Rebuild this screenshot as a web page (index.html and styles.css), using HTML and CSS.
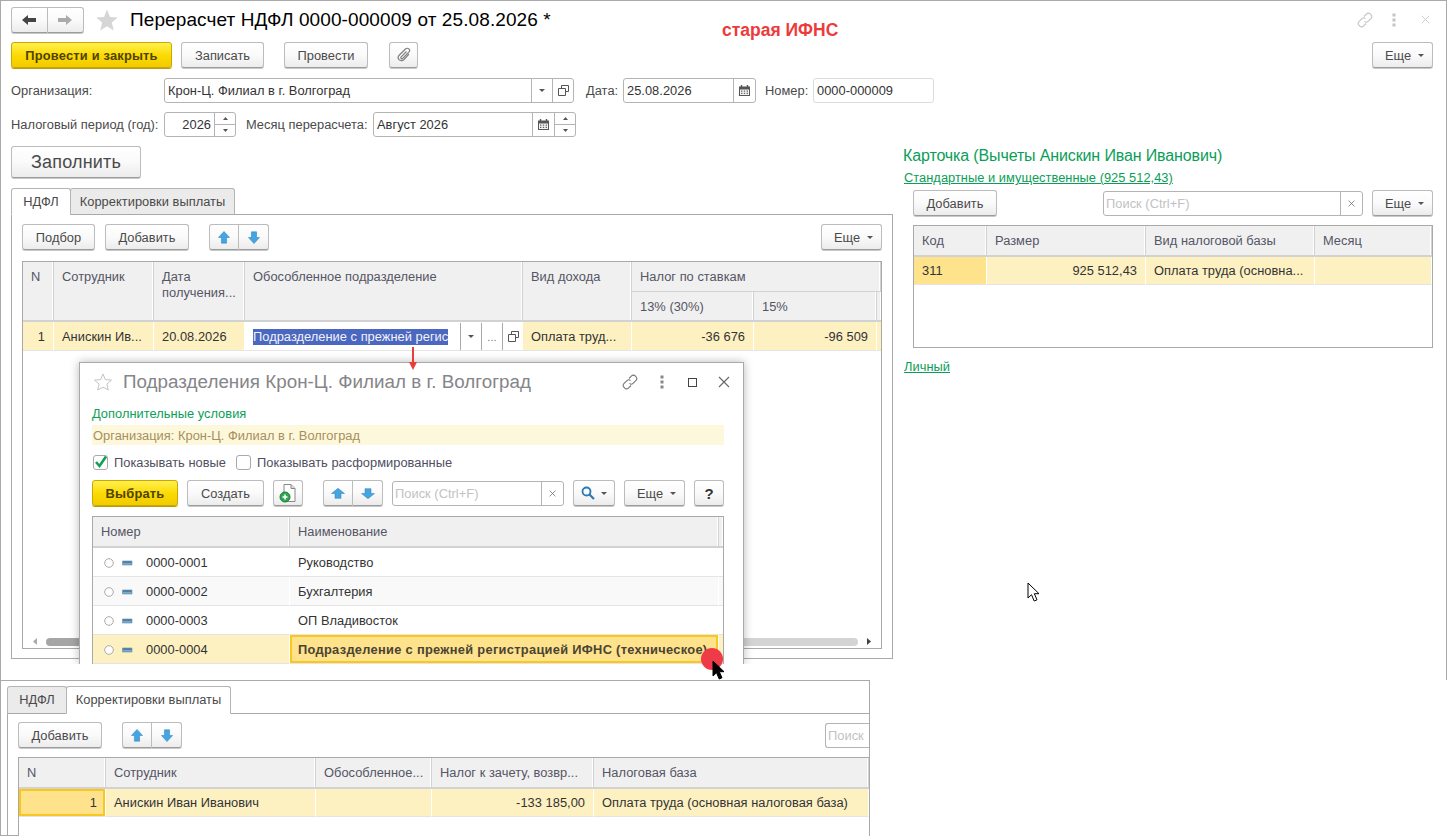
FILE: index.html
```html
<!DOCTYPE html>
<html lang="ru">
<head>
<meta charset="utf-8">
<title>Перерасчет НДФЛ</title>
<link rel="stylesheet" href="styles.css">
</head>
<body>
<svg class="defs" width="0" height="0" aria-hidden="true">
  <symbol id="i-tri" viewBox="0 0 7 4" preserveAspectRatio="none"><path d="M0 0h7L3.5 4z" fill="currentColor"/></symbol>
  <symbol id="i-open" viewBox="0 0 11 11"><path d="M3.5 3.5V.5h7v6h-3M.5 3.5h7v7h-7z" fill="none" stroke="#555"/></symbol>
  <symbol id="i-cal" viewBox="0 0 11 11"><path d="M0 1.5h11V11H0z" fill="#555"/><path d="M2.5 0v3M8.5 0v3" stroke="#555" stroke-width="1.4"/><path d="M1 4.5h9V10H1z" fill="#f4f4f4"/><path d="M2 5.5h1.4v1.2H2zM4.8 5.5h1.4v1.2H4.8zM7.6 5.5H9v1.2H7.6zM2 7.8h1.4V9H2zM4.8 7.8h1.4V9H4.8zM7.6 7.8H9V9H7.6z" fill="#666"/></symbol>
  <symbol id="i-up" viewBox="0 0 14 16" preserveAspectRatio="none"><path d="M7 .5 13.5 8H10v7H4V8H.5z" fill="#45a4e2" stroke="#2b7fb8" stroke-width=".6"/></symbol>
  <symbol id="i-down" viewBox="0 0 14 16" preserveAspectRatio="none"><path d="M7 15.5 13.5 8H10V1H4v7H.5z" fill="#45a4e2" stroke="#2b7fb8" stroke-width=".6"/></symbol>
  <symbol id="i-link" viewBox="0 0 16 16"><g fill="none" stroke="currentColor" stroke-width="1.1"><path d="M7 4.5 9.6 1.9a2.5 2.5 0 0 1 3.6 0l.9.9a2.5 2.5 0 0 1 0 3.6L11 9.4a2.5 2.5 0 0 1-3.5 0"/><path d="M9 11.5 6.400 14.100a2.500 2.500 0 0 1-3.600 0l-.9-.9a2.500 2.500 0 0 1 0-3.600L5 6.600a2.500 2.500 0 0 1 3.500 0"/></g></symbol>
  <symbol id="i-dots" viewBox="0 0 4 14"><path d="M.5.5h3v3h-3zM.5 5.500h3v3h-3zM.5 10.500h3v3h-3z" fill="currentColor"/></symbol>
  <symbol id="i-x" viewBox="0 0 12 12"><path d="M1 1l10 10M11 1 1 11" stroke="currentColor" stroke-width="1.1" fill="none"/></symbol>
  <symbol id="i-row" viewBox="0 0 32 12"><circle cx="5" cy="6" r="4.300" fill="#fff" stroke="#aaa"/><path d="M18.500 4h9.500v4h-9.500z" fill="#7fa9c9" stroke="#5d87a8" stroke-width=".6"/><path d="M19 4.500h8.500v1.200H19z" fill="#3d6a8f"/></symbol>
  <symbol id="i-cursor" viewBox="0 0 13 20"><path d="M1 1v15l3.500-3.300L7.200 19l2.800-1.200-2.700-6.100H12z" fill="currentColor" stroke="#000" stroke-linejoin="round"/></symbol>
</svg>

<section class="win main-win">
  <header class="title-bar">
    <div class="btn-group nav-group">
      <button class="btn seg seg-nav"><svg width="14" height="10" viewBox="0 0 14 10"><path d="M0 5l6-5v3h8v4H6v3z" fill="#444"/></svg></button>
      <button class="btn seg seg-nav"><svg width="14" height="10" viewBox="0 0 14 10"><path d="M14 5 8 0v3H0v4h8v3z" fill="#aaa"/></svg></button>
    </div>
    <svg class="star" width="22" height="22" viewBox="0 0 22 22"><path d="M11 .5l3 7.600 7.800.4-6 5.100 2 7.900L11 17.200l-6.800 4.300 2-7.900-6-5.100L8 8.100z" fill="#d6d6d6"/></svg>
    <h1 class="doc-title">Перерасчет НДФЛ 0000-000009 от 25.08.2026 *</h1>
    <span class="old-note">старая ИФНС</span>
    <div class="win-icons">
      <svg class="ic-link" width="16" height="16"><use href="#i-link"/></svg>
      <svg class="ic-dots" width="4" height="14"><use href="#i-dots"/></svg>
      <svg class="ic-x" width="9" height="9"><use href="#i-x"/></svg>
    </div>
  </header>

  <div class="toolbar tb-main">
    <button class="btn btn-yellow w161">Провести и закрыть</button>
    <button class="btn w83 m9">Записать</button>
    <button class="btn w84 m20">Провести</button>
    <button class="btn w29 m21"><svg width="15" height="16" viewBox="0 0 15 16"><path d="M13 7 8 12.500c-1.500 1.500-3.800 1.500-5 .2s-1-3.300.4-4.700L9.500 2c1-1 2.500-1 3.400-.1s.9 2.300-.1 3.300L6.700 11.300c-.5.5-1.200.5-1.600.1s-.4-1.100.1-1.600L10.500 4.500" fill="none" stroke="#808080" stroke-width="1.200"/></svg></button>
    <button class="btn more w61 push">Еще<svg class="tri" width="6" height="3"><use href="#i-tri"/></svg></button>
  </div>

  <div class="form-row fr1">
    <label class="lbl w153">Организация:</label>
    <div class="field w410"><span class="val">Крон-Ц. Филиал в г. Волгоград</span>
      <span class="fb"><svg class="tri" width="6" height="3"><use href="#i-tri"/></svg></span>
      <span class="fb fb-open"><svg width="11" height="11"><use href="#i-open"/></svg></span></div>
    <label class="lbl m12 w37">Дата:</label>
    <div class="field w133"><span class="val">25.08.2026</span><span class="fb fb-cal"><svg width="11" height="11"><use href="#i-cal"/></svg></span></div>
    <label class="lbl m9 w48">Номер:</label>
    <div class="field field-light w121"><span class="val">0000-000009</span></div>
  </div>

  <div class="form-row fr2">
    <label class="lbl w153">Налоговый период (год):</label>
    <div class="field w72"><span class="val right">2026</span>
      <span class="spin"><span><svg class="tri-up" width="5" height="3"><use href="#i-tri"/></svg></span><span><svg width="5" height="3"><use href="#i-tri"/></svg></span></span></div>
    <label class="lbl m10 w127">Месяц перерасчета:</label>
    <div class="field w203"><span class="val">Август 2026</span><span class="fb fb-cal"><svg width="11" height="11"><use href="#i-cal"/></svg></span>
      <span class="spin"><span><svg class="tri-up" width="5" height="3"><use href="#i-tri"/></svg></span><span><svg width="5" height="3"><use href="#i-tri"/></svg></span></span></div>
  </div>

  <div class="body-cols">
    <div class="left-col">
      <button class="btn btn-big">Заполнить</button>
      <div class="tabs tabs-main">
        <span class="tab tab-active t60">НДФЛ</span>
        <span class="tab t164">Корректировки выплаты</span>
      </div>
      <div class="tab-panel panel-main">
        <div class="toolbar">
          <button class="btn w73">Подбор</button>
          <button class="btn w84 m10">Добавить</button>
          <div class="btn-group m20">
            <button class="btn seg seg-arrow"><svg width="12" height="13"><use href="#i-up"/></svg></button>
            <button class="btn seg seg-arrow"><svg width="12" height="13"><use href="#i-down"/></svg></button>
          </div>
          <button class="btn more w61 push">Еще<svg class="tri" width="6" height="3"><use href="#i-tri"/></svg></button>
        </div>
        <div class="grid-box main-grid">
          <table class="grid t-main">
            <colgroup><col class="c31"><col class="c100"><col class="c91"><col class="c278"><col class="c109"><col class="c122"><col class="c123"><col></colgroup>
            <thead>
              <tr class="h30"><th rowspan="2">N</th><th rowspan="2">Сотрудник</th><th rowspan="2">Дата получения...</th><th rowspan="2">Обособленное подразделение</th><th rowspan="2">Вид дохода</th><th colspan="3" class="th-group">Налог по ставкам</th></tr>
              <tr class="h30"><th>13% (30%)</th><th>15%</th><th class="slim"></th></tr>
            </thead>
            <tbody>
              <tr class="row-sel r28">
                <td class="right">1</td><td>Анискин Ив...</td><td>20.08.2026</td>
                <td class="edit-cell"><div class="edit-inner"><span class="edit-text"><span class="edit-sel">Подразделение с прежней регис</span></span><span class="eb"><svg class="tri" width="6" height="3"><use href="#i-tri"/></svg></span><span class="eb eb-dots">...</span><span class="eb"><svg width="11" height="11"><use href="#i-open"/></svg></span></div></td>
                <td>Оплата труд...</td><td class="right">-36 676</td><td class="right">-96 509</td><td class="slim"></td>
              </tr>
            </tbody>
          </table>
          <div class="hscroll">
            <svg width="4" height="7" viewBox="0 0 4 7"><path d="M4 0v7L0 3.500z" fill="#aaa"/></svg>
            <span class="thumb"></span>
            <svg width="4" height="7" viewBox="0 0 4 7"><path d="M0 0v7l4-3.500z" fill="#444"/></svg>
          </div>
        </div>
      </div>
    </div>

    <aside class="right-col">
      <h2 class="card-title">Карточка (Вычеты Анискин Иван Иванович)</h2>
      <a class="green-link">Стандартные и имущественные (925 512,43)</a>
      <div class="right-inner">
        <div class="toolbar">
          <button class="btn w84">Добавить</button>
          <div class="field search w260 push"><span class="val ph">Поиск (Ctrl+F)</span><span class="fb fb-x"><svg width="7" height="7"><use href="#i-x"/></svg></span></div>
          <button class="btn more w61 m9">Еще<svg class="tri" width="6" height="3"><use href="#i-tri"/></svg></button>
        </div>
        <div class="grid-box card-grid">
          <table class="grid">
            <colgroup><col class="c73"><col class="c159"><col class="c169"><col></colgroup>
            <thead><tr class="h31"><th>Код</th><th>Размер</th><th>Вид налоговой базы</th><th>Месяц</th></tr></thead>
            <tbody><tr class="row-sel r28"><td class="cell-cur">311</td><td class="right">925 512,43</td><td>Оплата труда (основна...</td><td></td></tr></tbody>
          </table>
        </div>
      </div>
      <a class="green-link lnk-personal">Личный</a>
    </aside>
  </div>
</section>

<section class="win popup">
  <header class="pop-title">
    <svg class="pop-star" width="18" height="18" viewBox="0 0 18 18"><path d="M9 1l2.400 5.600 6.100.5-4.600 4 1.400 6L9 14l-5.300 3.100 1.400-6-4.600-4 6.100-.5z" fill="#fff" stroke="#c4c4c4"/></svg>
    <h2 class="pop-h">Подразделения Крон-Ц. Филиал в г. Волгоград</h2>
    <div class="pop-icons">
      <svg class="p-link" width="16" height="16"><use href="#i-link"/></svg>
      <svg class="p-dots" width="4" height="14"><use href="#i-dots"/></svg>
      <span class="p-max"></span>
      <svg class="p-x" width="12" height="12"><use href="#i-x"/></svg>
    </div>
  </header>
  <div class="pop-body">
    <a class="extra">Дополнительные условия</a>
    <div class="org-bar">Организация: Крон-Ц. Филиал в г. Волгоград</div>
    <div class="check-row">
      <span class="chk"><svg width="15" height="15" viewBox="0 0 15 15"><path d="M3 7l3.500 4L13 1.500" fill="none" stroke="#0e9f58" stroke-width="2.600"/></svg></span>
      <span class="chk-lbl lbl-new">Показывать новые</span>
      <span class="chk"></span>
      <span class="chk-lbl">Показывать расформированные</span>
    </div>
    <div class="toolbar">
      <button class="btn btn-yellow w86">Выбрать</button>
      <button class="btn w77 m9">Создать</button>
      <button class="btn w30 m9"><svg width="18" height="20" viewBox="0 0 18 20"><path d="M5 1.500h7l4 4v13H5z" fill="#fff" stroke="#888"/><path d="M12 1.500v4h4" fill="#ddd" stroke="#888"/><circle cx="6" cy="14" r="5" fill="#2fa84f" stroke="#1d7d38"/><path d="M3.500 14h5M6 11.500v5" stroke="#fff" stroke-width="1.600"/></svg></button>
      <div class="btn-group m20">
        <button class="btn seg seg-arrow"><svg width="14" height="11"><use href="#i-up"/></svg></button>
        <button class="btn seg seg-arrow"><svg width="14" height="11"><use href="#i-down"/></svg></button>
      </div>
      <div class="field search w172 m9"><span class="val ph">Поиск (Ctrl+F)</span><span class="fb fb-x"><svg width="7" height="7"><use href="#i-x"/></svg></span></div>
      <button class="btn w42 m9 find"><svg width="14" height="14" viewBox="0 0 14 14"><circle cx="5.500" cy="5.500" r="4" fill="none" stroke="#2b78b5" stroke-width="1.800"/><path d="M8.500 8.500 13 13" stroke="#2b78b5" stroke-width="2.200"/></svg><svg class="tri" width="6" height="3"><use href="#i-tri"/></svg></button>
      <button class="btn more w61 m9">Еще<svg class="tri" width="6" height="3"><use href="#i-tri"/></svg></button>
      <button class="btn w30 m9 help">?</button>
    </div>
    <div class="grid-box pop-grid">
      <table class="grid">
        <colgroup><col class="c197"><col class="c429"><col></colgroup>
        <thead><tr class="h31"><th>Номер</th><th>Наименование</th><th class="slim"></th></tr></thead>
        <tbody>
          <tr class="r29"><td class="num"><svg width="32" height="12"><use href="#i-row"/></svg><span>0000-0001</span></td><td>Руководство</td><td class="slim"></td></tr>
          <tr class="r29 alt"><td class="num"><svg width="32" height="12"><use href="#i-row"/></svg><span>0000-0002</span></td><td>Бухгалтерия</td><td class="slim"></td></tr>
          <tr class="r29"><td class="num"><svg width="32" height="12"><use href="#i-row"/></svg><span>0000-0003</span></td><td>ОП Владивосток</td><td class="slim"></td></tr>
          <tr class="r29 row-sel"><td class="num"><svg width="32" height="12"><use href="#i-row"/></svg><span>0000-0004</span></td><td class="cell-focus bold">Подразделение с прежней регистрацией ИФНС (техническое)</td><td class="slim"></td></tr>
        </tbody>
      </table>
    </div>
  </div>
</section>

<section class="win lower-win">
  <div class="tabs tabs-lower">
    <span class="tab t59">НДФЛ</span>
    <span class="tab tab-active t165">Корректировки выплаты</span>
  </div>
  <div class="tab-panel panel-lower">
    <div class="toolbar">
      <button class="btn w84">Добавить</button>
      <div class="btn-group m20">
        <button class="btn seg seg-arrow"><svg width="12" height="13"><use href="#i-up"/></svg></button>
        <button class="btn seg seg-arrow"><svg width="12" height="13"><use href="#i-down"/></svg></button>
      </div>
      <div class="field search lower-search push"><span class="val ph">Поиск</span></div>
    </div>
    <div class="grid-box lower-grid">
      <table class="grid">
        <colgroup><col class="c87"><col class="c210"><col class="c116"><col class="c162"><col></colgroup>
        <thead><tr class="h31"><th>N</th><th>Сотрудник</th><th>Обособленное...</th><th>Налог к зачету, возвр...</th><th>Налоговая база</th></tr></thead>
        <tbody><tr class="row-sel r28"><td class="right cell-focus">1</td><td>Анискин Иван Иванович</td><td></td><td class="right">-133 185,00</td><td>Оплата труда (основная налоговая база)</td></tr></tbody>
      </table>
    </div>
  </div>
</section>

<svg class="red-arrow" width="8" height="24" viewBox="0 0 8 24"><path d="M3 0h2v15h3l-4 8-4-8h3z" fill="#ec3b3b"/></svg>
<span class="red-dot"></span>
<svg class="cur cur-black" width="13" height="20"><use href="#i-cursor"/></svg>
<svg class="cur cur-white" width="13" height="20"><use href="#i-cursor"/></svg>
</body>
</html>
```
FILE: styles.css
```css
* { box-sizing: border-box; }
html, body { margin: 0; padding: 0; }
body {
  position: relative;
  width: 1447px;
  height: 836px;
  overflow: hidden;
  background: #fff;
  font-family: "Liberation Sans", Arial, sans-serif;
  font-size: 12.85px;
  letter-spacing: .03px;
  color: #4a4a4a;
}
.defs { position: absolute; }
.win { position: absolute; background: #fff; }
h1, h2 { margin: 0; font-weight: normal; }

/* main window */
.main-win {
  left: 0; top: 0; width: 1447px; height: 680px;
  border: 1px solid #a9a9a9;
  border-bottom: 0;
  padding: 6px 13px 0 10px;
}
.title-bar { display: flex; align-items: center; height: 25px; position: relative; }
.nav-group { width: 73px; height: 25px; }
.seg-nav { width: 50%; height: 25px; }
.star { margin-left: 12px; }
.doc-title { margin-left: 12px; font-size: 19px; letter-spacing: .1px; color: #000; white-space: nowrap; }
.old-note { position: absolute; left: 711px; top: 13px; font-size: 17.5px; font-weight: bold; letter-spacing: 0; color: #ee3a3a; }
.win-icons { margin-left: auto; display: flex; align-items: center; color: #c4c4c4; margin-right: 3px; }
.ic-dots { margin-left: 19px; }
.ic-x { margin-left: 25px; }

/* buttons */
.btn {
  display: inline-flex; align-items: center; justify-content: center;
  height: 26px; padding: 0;
  border: 1px solid #bcbcbc; border-bottom-color: #9c9c9c; border-radius: 3px;
  background: linear-gradient(#fff, #fafafa 50%, #ececec);
  box-shadow: 0 1px 0 #c8c8c8;
  font: 12.85px "Liberation Sans", Arial, sans-serif;
  letter-spacing: .03px;
  color: #4a4a4a;
}
.btn-yellow {
  background: linear-gradient(#fff04f, #fbd900 55%, #f2cb00);
  border-color: #c9a800; font-weight: bold; color: #4f4300; box-shadow: 0 1px 0 #b89b12; letter-spacing: .2px;
}
.btn-big { width: 130px; height: 32px; padding-top: 1px; font-size: 18px; letter-spacing: .2px; display: flex; }
.btn-group { display: inline-flex; height: 26px; }
.seg { border-radius: 0; }
.seg:first-child { border-radius: 3px 0 0 3px; }
.seg:last-child { border-radius: 0 3px 3px 0; border-left: 0; }
.seg-arrow { width: 30px; }
.more { gap: 7px; padding-left: 4px; }
.tri { color: #555; }
.tri-up { transform: rotate(180deg); }
.find { gap: 6px; }
.help { font-size: 15px; font-weight: bold; color: #333; }

.toolbar { display: flex; align-items: flex-start; height: 26px; }
.tb-main { margin-top: 10px; }
.push { margin-left: auto; }
.m9 { margin-left: 9px; } .m10 { margin-left: 10px; } .m12 { margin-left: 12px; }
.m20 { margin-left: 20px; } .m21 { margin-left: 21px; }
.w29 { width: 29px; } .w30 { width: 30px; } .w37 { width: 37px; } .w42 { width: 42px; }
.w48 { width: 48px; } .w61 { width: 61px; } .w72 { width: 72px; } .w73 { width: 73px; }
.w77 { width: 77px; } .w83 { width: 83px; } .w84 { width: 84px; } .w86 { width: 86px; }
.w121 { width: 121px; } .w127 { width: 127px; } .w133 { width: 133px; } .w153 { width: 153px; }
.w161 { width: 161px; } .w172 { width: 172px; } .w203 { width: 203px; } .w260 { width: 260px; } .w410 { width: 410px; }

/* form */
.form-row { display: flex; align-items: center; height: 25px; }
.fr1 { margin-top: 10px; }
.fr2 { margin-top: 9px; }
.lbl { white-space: nowrap; }
.field {
  display: flex; align-items: stretch; height: 25px;
  border: 1px solid #b4b4b4; border-radius: 3px; background: #fff; overflow: hidden;
}
.field-light { border-color: #dcdcdc; }
.val { flex: 1; padding: 0 3px 0 3px; line-height: 23px; color: #333; white-space: nowrap; overflow: hidden; }
.val.right { text-align: right; padding-right: 3px; }
.ph { color: #c2c2c2; padding-left: 2px; }
.fb { width: 21px; flex: none; border-left: 1px solid #b4b4b4; display: flex; align-items: center; justify-content: center; }
.fb-open { width: 21px; }
.fb-cal { width: 22px; }
.fb-x { width: 22px; color: #555; }
.spin { width: 21px; flex: none; display: flex; flex-direction: column; border-left: 1px solid #b4b4b4; color: #555; }
.spin span { flex: 1; display: flex; align-items: center; justify-content: center; }
.spin span:first-child { border-bottom: 1px solid #b4b4b4; }
.spin svg { display: block; }

/* body columns */
.body-cols { display: flex; margin-top: 9px; }
.left-col { width: 882px; flex: none; }
.right-col { width: 530px; margin-left: 10px; flex: none; position: relative; }

/* tabs */
.tabs { display: flex; align-items: flex-end; height: 27px; position: relative; z-index: 1; }
.tabs-main { margin-top: 10px; }
.tab {
  display: block; height: 27px; line-height: 25px; text-align: center;
  border: 1px solid #b4b4b4; border-bottom: 1px solid #a9a9a9; border-radius: 3px 3px 0 0;
  background: #ebebeb; color: #4a4a4a; margin-left: -1px;
}
.tab:first-child { margin-left: 0; }
.tab-active { background: #fff; border-bottom-color: #fff; }
.t60 { width: 60px; } .t164 { width: 165px; } .t59 { width: 60px; } .t165 { width: 165px; }
.tab-panel { border: 1px solid #a9a9a9; background: #fff; margin-top: -1px; }
.panel-main { height: 445px; padding: 9px 10px 0; }

/* grids */
.grid-box { border: 1px solid #a9a9a9; background: #fff; overflow: hidden; position: relative; }
.main-grid { margin-top: 11px; height: 388px; display: flex; flex-direction: column; justify-content: space-between; }
.grid { width: 100%; table-layout: fixed; border-collapse: separate; border-spacing: 0; }
.grid th {
  background: #f0f0f0; font-weight: normal; text-align: left; vertical-align: top;
  padding: 7px 8px 0; color: #555565; line-height: 16px;
  border-right: 1px solid #d2d2d2; border-bottom: 2px solid #d2d2d2;
  box-shadow: inset -1px 0 0 #fff;
  overflow: hidden;
}
.grid td {
  padding: 0 8px; color: #333; white-space: nowrap; overflow: hidden;
  border-right: 1px solid #fff; border-bottom: 1px solid #e4e4e4; line-height: 16px;
}
.grid .slim { padding: 0; border-right: 0; }
.h30 { height: 30px; } .h31 { height: 31px; }
.r28 { height: 28px; } .r29 { height: 29px; }
.r28 td { padding-top: 1px; }
.r29 td { padding-top: 1px; }
.t-main .r28 td { padding-top: 2px; }
.right { text-align: right; }
.row-sel td { background: #fdf1c2; }
.alt td { background: #f9f9f9; }
.cell-cur { background: #fee28c !important; }
.cell-focus { background: #fee28c !important; box-shadow: inset 0 0 0 2px #f9c71d; }
.grid .bold { font-weight: bold; color: #4a4433; letter-spacing: .3px; overflow: visible; }
.th-group { border-bottom-width: 1px !important; }
.c31 { width: 31px; } .c100 { width: 100px; } .c91 { width: 91px; } .c278 { width: 278px; }
.c109 { width: 109px; } .c122 { width: 122px; } .c123 { width: 123px; } .c73 { width: 73px; }
.c159 { width: 159px; } .c169 { width: 169px; } .c197 { width: 197px; } .c429 { width: 429px; }
.c87 { width: 87px; } .c210 { width: 210px; } .c116 { width: 116px; } .c162 { width: 162px; }

.t-main .row-sel .edit-cell { background: #fff; padding: 1px 0 0; border-right: 0; }
.edit-inner { display: flex; height: 27px; align-items: stretch; }
.edit-text { width: 215px; padding: 6px 8px 0 8px; overflow: hidden; white-space: nowrap; }
.edit-sel { background: #4a67c2; color: #f3f3f3; display: inline-block; line-height: 16px; }
.eb { width: 21px; border-left: 1px solid #a9a9a9; display: flex; align-items: center; justify-content: center; color: #777; }
.eb-dots { font-size: 11px; }

.hscroll { display: flex; align-items: center; height: 9px; margin: 0 10px 2px; gap: 9px; }
.thumb { flex: 1; height: 8px; border-radius: 4px; background: linear-gradient(90deg, #a6a6a6 50%, #d4d4d4 50%); }

/* right column */
.card-title { margin-top: 1px; font-size: 16px; letter-spacing: -.13px; line-height: 18px; color: #0b9e57; white-space: nowrap; }
.green-link { display: block; margin: 5px 0 0 1px; line-height: 16px; color: #0b9e57; text-decoration: underline; }
.right-inner { margin: 4px 0 0 10px; }
.search { flex: none; margin-top: 1px; }
.card-grid { margin-top: 9px; height: 123px; }
.lnk-personal { margin-top: 11px; }

/* popup */
.popup {
  left: 79px; top: 362px; width: 665px; height: 302px;
  border: 1px solid #a9a9a9; border-bottom: 0;
  box-shadow: 0 0 9px rgba(0,0,0,.28);
  clip-path: inset(-12px -12px 0 -12px);
}
.pop-title { display: flex; align-items: center; height: 38px; padding: 0 13px 0 14px; }
.pop-h { margin-left: 11px; font-size: 18.8px; color: #85858a; white-space: nowrap; }
.pop-icons { margin-left: auto; display: flex; align-items: center; color: #777; }
.p-link { margin-right: 22px; }
.p-dots { margin-right: 24px; color: #888; }
.p-max { width: 9px; height: 9px; border: 1px solid #444; margin-right: 21px; }
.p-x { color: #666; }
.pop-body { padding: 5px 19px 0 12px; }
.extra { display: block; line-height: 16px; color: #0b9e57; }
.org-bar { margin-top: 3px; height: 20px; line-height: 21px; background: #fdf8dc; color: #a68f5b; padding-left: 1px; }
.check-row { display: flex; align-items: center; height: 18px; margin-top: 8px; margin-left: 1px; }
.chk { width: 15px; height: 15px; border: 1px solid #a9a9a9; border-radius: 3px; display: block; background: #fff; flex: none; }
.chk svg { display: block; margin: -1px; }
.chk-lbl { margin-left: 6px; color: #4f4f5f; white-space: nowrap; }
.lbl-new { width: 122px; flex: none; }
.pop-body .toolbar { margin-top: 9px; }
.pop-grid { margin-top: 10px; height: 160px; }
.num svg { vertical-align: -2px; margin-left: 3px; }
.num span { margin-left: 10px; }

/* lower window */
.lower-win {
  left: 0; top: 680px; width: 870px; height: 156px;
  border: 1px solid #a9a9a9;
  padding: 5px 0 0 6px;
}
.tabs-lower { height: 28px; }
.tabs-lower .tab { height: 28px; }
.panel-lower { height: 122px; border-right: 0; border-bottom: 0; padding: 8px 0 0 10px; }
.lower-search { width: 44px; height: 25px; border-right: 0; border-radius: 3px 0 0 3px; }
.lower-grid { margin-top: 9px; height: 80px; border-right: 0; border-bottom: 0; }

/* overlays */
.red-arrow { position: absolute; left: 409px; top: 347px; }
.red-dot { position: absolute; left: 701px; top: 648px; width: 22px; height: 22px; border-radius: 50%; background: #ef3b47; }
.cur { position: absolute; }
.cur-black { left: 712px; top: 660px; color: #000; }
.cur-white { left: 1027px; top: 582px; color: #fff; }
```
